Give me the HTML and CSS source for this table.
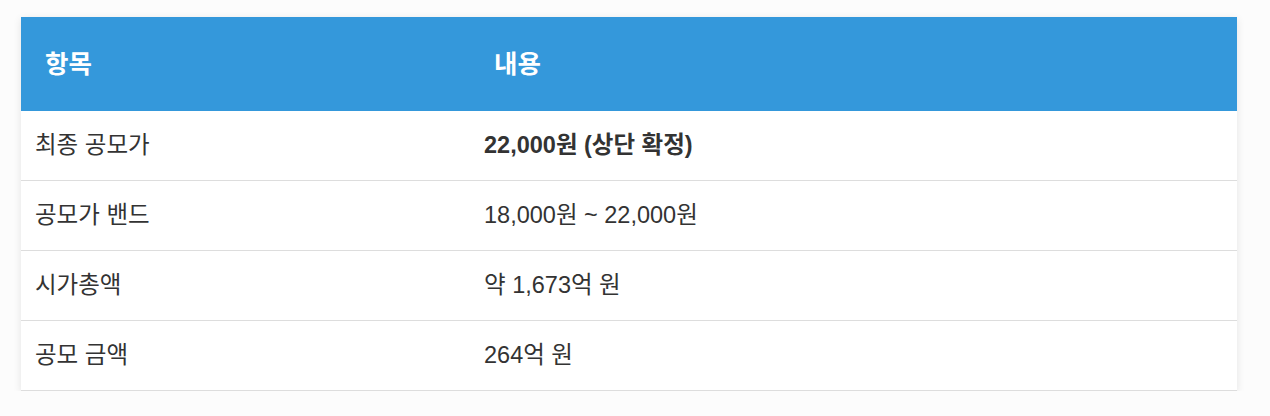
FILE: index.html
```html
<!DOCTYPE html>
<html lang="ko">
<head>
<meta charset="utf-8">
<title>공모 정보</title>
<link rel="stylesheet" href="styles.css">
</head>
<body>
  <div class="wrap">
    <table class="info-table">
      <thead>
        <tr>
          <th class="col-key">항목</th>
          <th>내용</th>
        </tr>
      </thead>
      <tbody>
        <tr>
          <td>최종 공모가</td>
          <td><strong>22,000원 (상단 확정)</strong></td>
        </tr>
        <tr>
          <td>공모가 밴드</td>
          <td>18,000원 ~ 22,000원</td>
        </tr>
        <tr>
          <td>시가총액</td>
          <td>약 1,673억 원</td>
        </tr>
        <tr>
          <td>공모 금액</td>
          <td>264억 원</td>
        </tr>
      </tbody>
    </table>
  </div>
</body>
</html>
```

FILE: styles.css
```css
html, body {
  margin: 0;
  padding: 0;
  background: #fcfcfc;
}

body {
  font-family: "Liberation Sans", "Noto Sans CJK KR", Arial, sans-serif;
  color: #333333;
}

.wrap {
  padding: 17px 33px 0 21px;
}

.info-table {
  width: 1216px;
  border-collapse: collapse;
  background: #ffffff;
  box-shadow: 0 2px 8px rgba(0, 0, 0, 0.1);
}

.info-table th {
  background: #3498db;
  color: #ffffff;
  font-size: 25.5px;
  font-weight: bold;
  line-height: 36px;
  text-align: left;
  padding: 29px 24px;
}

.info-table .col-key {
  width: 401px;
}

.info-table td {
  font-size: 23.5px;
  line-height: 33px;
  padding: 18px 14px;
  border-bottom: 1px solid #dddddd;
}

.info-table strong {
  font-weight: bold;
}
```
